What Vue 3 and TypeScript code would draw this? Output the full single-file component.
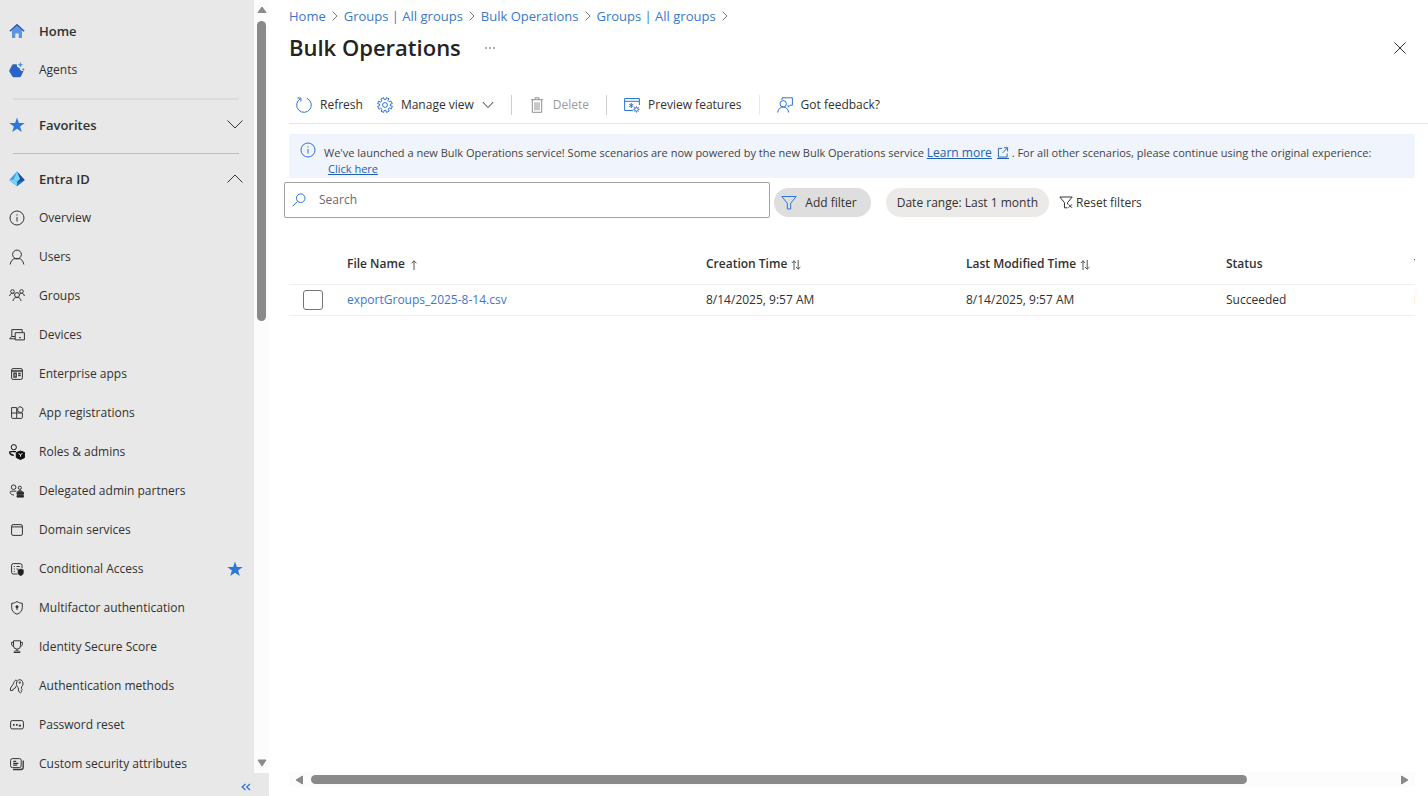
<script setup lang="ts">
import { ref } from 'vue'

interface NavItem {
  label: string
  icon: string
  starred?: boolean
}

const icons: Record<string, string> = {
  home: '<path d="M3 7.5 8 3l5 4.5V15H9.7v-4.6H6.3V15H3z" fill="#5b93e6"/><path d="M8 .8 0.4 7.8l1 1L8 3l6.6 5.8 1-1z" fill="#285ba8"/>',
  agents: '<path d="M4.600 2.200h3.200c-.2 2.300.8 3.400 2.700 3.700.1 2 1.300 3.100 3.900 3.200l-2.200 5a1.800 1.800 0 0 1-1.700 1.200H4.800a1.800 1.800 0 0 1-1.600-1L.5 9.700a2 2 0 0 1 0-1.800l2.500-4.700a1.800 1.800 0 0 1 1.600-1z" fill="#2b62c6"/><path d="m11.400 0 .8 2 2 .8-2 .8-.8 2-.8-2-2-.8 2-.8z" fill="#4a8be6"/><path d="m14.300 5.800.5 1.300 1.200.5-1.200.5-.5 1.200-.5-1.200-1.300-.5 1.300-.5z" fill="#4a8be6"/>',
  star: '<path d="m8 .4 1.900 5.500h5.800l-4.600 3.500 1.700 5.700L8 11.700l-4.800 3.400 1.700-5.700L.3 5.900h5.800z" fill="#2f77d6"/>',
  entra: '<path d="M8 .6 15.700 9 8 15 .3 9z" fill="#3c9bdc"/><path d="M8 .6 15.700 9 8 15V9.500L11 8z" fill="#1d4c9c"/><path d="M8 .6 11 8 8 11 4.500 8.500z" fill="#73d4f4"/><path d="M.3 9 8 11.500 15.700 9 8 15z" fill="#2476bd"/><path d="M.3 9 4.500 8.500 8 11v4z" fill="#76d6f5"/>',
  info: '<circle cx="8" cy="8" r="7"/><path d="M8 7v4.500M8 4.300v1.300"/>',
  user: '<circle cx="8" cy="5.500" r="4.400"/><path d="M1.200 15.500c.5-3.600 2.600-5.600 4.700-5.900h4.200c2.100.3 4.200 2.300 4.700 5.900"/>',
  groups: '<circle cx="3.500" cy="3.500" r="1.800"/><circle cx="12.500" cy="3.500" r="1.800"/><circle cx="8" cy="7" r="2.400"/><path d="M.6 8C1 6.300 2 5.300 3.500 5.300S5 6 5.600 6.500M10.400 6.500c.6-.8 1.200-1.200 2.100-1.200 1.500 0 2.500 1 2.900 2.700M4 13c.3-2.200 1.300-3.600 4-3.600s3.700 1.400 4 3.600"/>',
  devices: '<path d="M2.800 9.500V2.600h10.400v2.600M6 11.800H.7L2.600 9.500H6M6.200 5.700h9.200v7.200H6.200zM10 10.700h2"/>',
  enterprise: '<rect x="2.600" y="2.600" width="10.800" height="10.800" rx="1.500"/><path d="M2.600 5h10.800M5 7.200h2.200v4H5zM9.200 7.500h2.500M9.200 9.500h2.500" stroke-width="1.300"/>',
  appreg: '<path d="M2.600 2.600h5.100v10.800H3.600a1 1 0 0 1-1-1zM2.600 8h10.800v4.400a1 1 0 0 1-1 1H7.700"/><path d="m11 1.500 3 2-.3 3-2 1.200-3-1.400V3.500z"/>',
  roles: '<circle cx="4.800" cy="3.200" r="2.600" stroke="#111"/><path d="M7 7.600H1.500C0 7.600.5 11.200 4.800 11.200" stroke="#111" stroke-width="1.400"/><path d="m11.500 7 4.200 1.500v5L11.500 15.500l-4.200-2v-5z" fill="#111" stroke="#111"/><path d="m9.500 9.500 2 1.200 2-1.200M11.500 10.700v2" stroke="#eee"/>',
  partners: '<circle cx="4.600" cy="4.200" r="2.300"/><circle cx="10.800" cy="4.800" r="1.600"/><path d="M7.400 8.200H2C.5 8.200.9 12 5 12"/><path d="M8.500 8.800c.2-1.500 4.800-1.500 5 0M8 9.300h6.500v2H8zM8 12.500h6.500v1.600H8z" fill="#222"/>',
  domain: '<rect x="2.600" y="2.600" width="10.800" height="10.800" rx="1.500"/><path d="M2.600 4.900h10.800"/>',
  conditional: '<path d="M8.500 13H4.300a1.700 1.700 0 0 1-1.700-1.700v-7a1.700 1.700 0 0 1 1.700-1.700h7a1.700 1.700 0 0 1 1.700 1.700v3M4.800 5.500h1M7.500 5.500h3.300M4.800 8h1M7.500 8h1.800M4.800 10.500h1"/><path d="m11.700 7.700 3 1v2.600c0 1.800-1 3-3 3.700-2-.7-3-1.900-3-3.700V8.700z" fill="#222" stroke="none"/>',
  mfa: '<path d="M8 1.500c1.700 1.200 3.300 1.700 5.300 1.800v4.200c0 3.200-1.800 5.400-5.300 6.700C4.500 12.900 2.700 10.700 2.700 7.500V3.300C4.700 3.200 6.300 2.700 8 1.500z"/><circle cx="8" cy="6.800" r="1.100" fill="#222"/><path d="M8 7v3"/>',
  trophy: '<path d="M4.500 1.800h7v4.900a3.500 3.500 0 0 1-7 0zM4.500 3.400H2.600v1.500c0 1.500.8 2.300 2 2.500M11.500 3.400h1.900v1.500c0 1.500-.8 2.300-2 2.500M8 10.200V12M5 13.500c0-1 .5-1.500 1.200-1.500h3.600c.7 0 1.200.5 1.200 1.500z"/>',
  keys: '<path d="M8 2.700C6 1 4.900 4 4.500 5.700L1.500 10l-.1 2.500h2.300l.6-1.500 1.500-.5 1.300-2.400"/><path d="M9.200 9.500C6.500 8 6.800 2 10.800 1.700c3.800.3 4 5.700 1.800 7.100l-.3 1.500 1 1-1 1.300.5 1-1.300 1.200-1.700-1.200z"/><circle cx="10.800" cy="4.600" r=".7"/>',
  password: '<rect x="1.600" y="3.600" width="12.800" height="8.300" rx="1.700"/><path d="M4 7.800h1.600M7 7.800h1.600M9.800 8.600H12" stroke-width="1.700"/>',
  attributes: '<rect x="1.600" y="2.600" width="10.600" height="9" rx="1.800"/><path d="M4.200 5.400h3M4.200 7.300h5.200M4.200 9.200h4M14.200 4.500v6.700a2.300 2.300 0 0 1-2.300 2.300H4" stroke-width="1.300"/>',
}

const topItems: NavItem[] = [
  { label: 'Home', icon: 'home' },
  { label: 'Agents', icon: 'agents' },
]

const entraItems: NavItem[] = [
  { label: 'Overview', icon: 'info' },
  { label: 'Users', icon: 'user' },
  { label: 'Groups', icon: 'groups' },
  { label: 'Devices', icon: 'devices' },
  { label: 'Enterprise apps', icon: 'enterprise' },
  { label: 'App registrations', icon: 'appreg' },
  { label: 'Roles & admins', icon: 'roles' },
  { label: 'Delegated admin partners', icon: 'partners' },
  { label: 'Domain services', icon: 'domain' },
  { label: 'Conditional Access', icon: 'conditional', starred: true },
  { label: 'Multifactor authentication', icon: 'mfa' },
  { label: 'Identity Secure Score', icon: 'trophy' },
  { label: 'Authentication methods', icon: 'keys' },
  { label: 'Password reset', icon: 'password' },
  { label: 'Custom security attributes', icon: 'attributes' },
]

const crumbs = ['Home', 'Groups | All groups', 'Bulk Operations', 'Groups | All groups']

const rows = [
  {
    file: 'exportGroups_2025-8-14.csv',
    created: '8/14/2025, 9:57 AM',
    modified: '8/14/2025, 9:57 AM',
    status: 'Succeeded',
    type: 'Export',
  },
]

const search = ref('')
const selected = ref<string[]>([])
</script>

<template>
  <div class="portal">
    <aside class="sidebar">
      <div class="side-body">
        <nav class="nav" aria-label="Main">
          <a v-for="(item, i) in topItems" :key="item.label" href="#" class="nav-item" :class="{ strong: i === 0 }">
            <svg class="ico" viewBox="0 0 16 16" aria-hidden="true" v-html="icons[item.icon]"></svg>
            <span>{{ item.label }}</span>
          </a>
          <hr class="rule faint" />
          <button class="nav-item strong" type="button" aria-expanded="false">
            <svg class="ico" viewBox="0 0 16 16" aria-hidden="true" v-html="icons.star"></svg>
            <span>Favorites</span>
            <svg class="ico end line" viewBox="0 0 16 16" aria-hidden="true"><path d="m.5 3.500 7.500 7.500 7.500-7.500" /></svg>
          </button>
          <hr class="rule" />
          <button class="nav-item strong" type="button" aria-expanded="true">
            <svg class="ico" viewBox="0 0 16 16" aria-hidden="true" v-html="icons.entra"></svg>
            <span>Entra ID</span>
            <svg class="ico end line" viewBox="0 0 16 16" aria-hidden="true"><path d="M.5 11.500 8 4l7.500 7.500" /></svg>
          </button>
          <a v-for="item in entraItems" :key="item.label" href="#" class="nav-item">
            <svg class="ico line" viewBox="0 0 16 16" aria-hidden="true" v-html="icons[item.icon]"></svg>
            <span>{{ item.label }}</span>
            <svg v-if="item.starred" class="ico end" viewBox="0 0 16 16" aria-hidden="true" v-html="icons.star"></svg>
          </a>
        </nav>
        <div class="vbar" aria-hidden="true">
          <svg class="arrow" viewBox="0 0 10 8"><path d="M5 1 9 6.500H1z" /></svg>
          <div class="vtrack"><div class="vthumb"></div></div>
          <svg class="arrow" viewBox="0 0 10 8"><path d="M1 1h8L5 7z" /></svg>
        </div>
      </div>
      <div class="side-foot">
        <button type="button" class="collapse" aria-label="Collapse menu">
          <svg viewBox="0 0 10 8" aria-hidden="true"><path d="M4.500 1 1.200 4l3.300 3M9 1 5.700 4 9 7" /></svg>
        </button>
      </div>
    </aside>

    <main class="content">
      <nav class="crumbs" aria-label="Breadcrumb">
        <template v-for="(c, i) in crumbs" :key="i">
          <a href="#">{{ c }}</a>
          <svg viewBox="0 0 6 10" aria-hidden="true"><path d="m.7.7 4.300 4.300L.7 9.300" /></svg>
        </template>
      </nav>

      <header class="title-row">
        <h1>Bulk Operations</h1>
        <button type="button" class="plain more" aria-label="More">
          <svg viewBox="0 0 12 4" aria-hidden="true"><circle cx="2" cy="2" r=".8" /><circle cx="6" cy="2" r=".8" /><circle cx="10" cy="2" r=".8" /></svg>
        </button>
        <button type="button" class="plain close" aria-label="Close">
          <svg viewBox="0 0 12 12" aria-hidden="true"><path d="m.5.5 11 11M11.500.5l-11 11" /></svg>
        </button>
      </header>

      <div class="toolbar">
        <button type="button" class="plain tool">
          <svg class="ico blue" viewBox="0 0 16 16" aria-hidden="true"><path d="M10.800 1.300A7.300 7.300 0 1 1 4.200 1.800M1.300 1h3.600v3.600" /></svg>
          Refresh
        </button>
        <button type="button" class="plain tool manage">
          <svg class="ico blue" viewBox="0 0 16 16" aria-hidden="true">
            <circle cx="8" cy="8" r="2.400" />
            <path d="m6.700.6.4 2 1.800 0 .4-2 2.700 1.100-1.100 1.700 1.300 1.300L13.900 4l1.500 2.700-2 .4v1.800l2 .4-1.200 2.700-1.800-1.100-1.200 1.300 1.100 1.800-2.900 1.400-.5-2H7.100l-.4 2L4 14.300l1.100-1.800-1.400-1.300L2 12.300.6 9.300l2-.4V7.100l-2-.4 1.200-2.600 1.700 1.100 1.300-1.400L3.800 2z" />
          </svg>
          Manage view
          <svg class="chev" viewBox="0 0 12 8" aria-hidden="true"><path d="m.7 1 5.300 5.500L11.300 1" /></svg>
        </button>
        <span class="sep"></span>
        <button type="button" class="plain tool delete" disabled>
          <svg class="ico gray" viewBox="0 0 16 16" aria-hidden="true"><path d="M2 2.700h12M6 2.500V.8h4v1.700M3.300 3v12.300h9.400V3M6 5.300v8M8 5.300v8M10 5.300v8" /></svg>
          Delete
        </button>
        <span class="sep"></span>
        <button type="button" class="plain tool preview">
          <svg class="ico blue" viewBox="0 0 16 16" aria-hidden="true"><path d="M9 13.500H.6v-12h14.800V8M.6 4.300h14.800" /><circle cx="12.400" cy="12.400" r="1.800" /><path d="M12.400 9.300v1.300M12.400 14.200v1.400M9.300 12.400h1.300M14.200 12.400h1.400M10.200 10.200l.9.900M13.700 13.700l.9.900M14.600 10.200l-.9.900M11.100 13.700l-.9.900M7.300 6v5M5.200 7.200l4.200 2.500M9.400 7.200 5.200 9.700" /></svg>
          Preview features
        </button>
        <span class="sep faint"></span>
        <button type="button" class="plain tool feedback">
          <svg class="ico blue" viewBox="0 0 16 16" aria-hidden="true"><path d="M5 3V.8h10.400v7.400h-2.200l-2 2V8.200" /><circle cx="6.200" cy="6.800" r="3.200" /><path d="M.7 15.500c.4-3.500 2.600-5.500 5.500-5.500s5.100 2 5.500 5.500" /></svg>
          Got feedback?
        </button>
      </div>

      <section class="banner">
        <svg class="ico blue" viewBox="0 0 16 16" aria-hidden="true" v-html="icons.info"></svg>
        <p>
          We've launched a new Bulk Operations service! Some scenarios are now powered by the new Bulk Operations service
          <a href="#" class="learn">Learn more<svg viewBox="0 0 12 12" aria-hidden="true"><path d="M5 1.500H1v9.500h9.500V7M7 .8h4v4M11 .8 5.500 6.500" /></svg></a>
          . For all other scenarios, please continue using the original experience:<br />
          <a href="#" class="click">Click here</a>
        </p>
      </section>

      <div class="filters">
        <label class="search">
          <svg viewBox="0 0 14 14" aria-hidden="true"><circle cx="8.700" cy="5.200" r="4.300" /><path d="M5.500 8.400.6 13.300" /></svg>
          <input v-model="search" type="text" placeholder="Search" aria-label="Search" />
        </label>
        <button type="button" class="pill add">
          <svg class="ico blue" viewBox="0 0 16 16" aria-hidden="true"><path d="M.8 1.500h14.400L9.700 8.300V14H6.300V8.300z" /></svg>
          Add filter
        </button>
        <button type="button" class="pill range">Date range: Last 1 month</button>
        <button type="button" class="plain reset">
          <svg viewBox="0 0 14 13" aria-hidden="true"><path d="M8.500 11.800H5.500V6.700L.8 1h12.400L8.500 6.700v1.500M9.500 8.300l3.500 3.500M13 8.300l-3.500 3.500" /></svg>
          Reset filters
        </button>
      </div>

      <div class="grid-wrap">
        <table>
          <colgroup>
            <col class="c-check" />
            <col class="c-file" />
            <col class="c-time" />
            <col class="c-time" />
            <col class="c-status" />
            <col class="c-type" />
          </colgroup>
          <thead>
            <tr>
              <td></td>
              <th>File Name <svg viewBox="0 0 10 10" aria-hidden="true"><path d="M5 10V.8M2.500 3.300 5 .8l2.500 2.500" /></svg></th>
              <th>Creation Time <svg viewBox="0 0 10 10" aria-hidden="true"><path d="M3 10V.8M.8 3 3 .8 5 3M7.200 0v9.200M5 7l2.200 2.200L9.400 7" /></svg></th>
              <th>Last Modified Time <svg viewBox="0 0 10 10" aria-hidden="true"><path d="M3 10V.8M.8 3 3 .8 5 3M7.200 0v9.200M5 7l2.200 2.200L9.400 7" /></svg></th>
              <th>Status</th>
              <th>Type</th>
            </tr>
          </thead>
          <tbody>
            <tr v-for="r in rows" :key="r.file">
              <td class="check"><input v-model="selected" type="checkbox" :value="r.file" :aria-label="'Select ' + r.file" /></td>
              <td><a href="#">{{ r.file }}</a></td>
              <td>{{ r.created }}</td>
              <td>{{ r.modified }}</td>
              <td>{{ r.status }}</td>
              <td>{{ r.type }}</td>
            </tr>
          </tbody>
        </table>
      </div>

      <div class="hbar" aria-hidden="true">
        <svg viewBox="0 0 8 10"><path d="M7.500 1v8L1 5z" /></svg>
        <div class="htrack"><div class="hthumb"></div></div>
        <svg viewBox="0 0 8 10"><path d="M.5 1v8L7 5z" /></svg>
      </div>
    </main>
  </div>
</template>

<style>
body {
  margin: 0;
}
</style>

<style scoped>
* {
  box-sizing: border-box;
}
.portal {
  display: flex;
  height: 100vh;
  overflow: hidden;
  background: #fff;
  color: #323130;
  font-family: 'Open Sans', 'Noto Sans', sans-serif;
  font-size: 12px;
  line-height: 20px;
}
a {
  color: #3a78cb;
  text-decoration: none;
}
button,
input {
  font: inherit;
  color: inherit;
}
svg {
  display: block;
  flex: none;
  fill: none;
  stroke: #333;
  stroke-width: 1;
}
.ico {
  width: 16px;
  height: 16px;
  stroke: none;
}
.ico.line {
  stroke: #333;
}
.ico.blue {
  stroke: #2f74d8;
}
.ico.gray {
  stroke: #8f8f8f;
}

.sidebar {
  display: flex;
  flex-direction: column;
  flex: none;
  width: 269px;
  background: #e8e8e8;
}
.side-body {
  display: flex;
  flex: 1;
  min-height: 0;
}
.nav {
  flex: 1;
  overflow: hidden;
  padding-top: 11px;
}
.nav-item {
  display: flex;
  align-items: center;
  gap: 14px;
  width: 100%;
  height: 39px;
  padding: 0 11px 0 9px;
  border: 0;
  background: none;
  color: #323130;
  text-align: left;
}
.strong {
  font-size: 13px;
  font-weight: 600;
}
.nav-item .end {
  margin-left: auto;
}
.rule {
  height: 1px;
  margin: 9px 15px 5px 13px;
  border: 0;
  background: #bebebe;
}
.rule.faint {
  height: 2px;
  background: #dcdcdc;
}
.vbar {
  display: flex;
  flex-direction: column;
  align-items: center;
  width: 15px;
  padding: 6px 0;
  background: #fcfcfc;
}
.arrow {
  width: 10px;
  height: 8px;
}
.arrow path,
.hbar path {
  fill: #8a8a8a;
  stroke: #8a8a8a;
  stroke-linejoin: round;
}
.vtrack {
  flex: 1;
  padding: 7px 0;
}
.vthumb {
  width: 9px;
  height: 41%;
  border-radius: 5px;
  background: #8a8a8a;
}
.side-foot {
  display: flex;
  justify-content: flex-end;
  height: 23px;
  padding: 4px 18px 0 0;
}
.collapse {
  padding: 0;
  border: 0;
  background: none;
}
.collapse svg {
  width: 10px;
  height: 8px;
  stroke: #2f74d8;
  stroke-width: 1.300;
}

.content {
  display: flex;
  flex-direction: column;
  flex: 1;
  min-width: 0;
  padding: 6px 13px 9px 20px;
}
.crumbs {
  display: flex;
  align-items: center;
  gap: 6px;
  height: 20px;
  font-size: 13px;
}
.crumbs svg {
  width: 6px;
  height: 10px;
  stroke: #777;
}
.title-row {
  display: flex;
  align-items: center;
  height: 44px;
  padding-right: 9px;
}
h1 {
  margin: 0;
  padding-bottom: 2px;
  color: #242322;
  font-size: 22px;
  font-weight: 600;
  line-height: 32px;
}
.plain {
  display: flex;
  align-items: center;
  padding: 0;
  border: 0;
  background: none;
}
.more {
  margin-left: 23px;
}
.more svg {
  width: 12px;
  height: 4px;
  fill: #444;
  stroke: none;
}
.close {
  margin-left: auto;
}
.close svg {
  width: 12px;
  height: 12px;
}
.toolbar {
  display: flex;
  align-items: center;
  height: 54px;
  margin-right: -13px;
  padding: 17px 0 0 7px;
  border-bottom: 1px solid #e6e6e6;
}
.tool {
  gap: 8px;
}
.manage {
  margin-left: 14px;
}
.chev {
  width: 12px;
  height: 8px;
}
.sep {
  width: 1px;
  height: 20px;
  margin: 0 17px;
  background: #cfcfcf;
}
.sep.faint {
  background: #e8e8e8;
}
.delete {
  color: #9c9b9a;
}
.banner {
  display: flex;
  gap: 8px;
  margin-top: 10px;
  padding: 8px 11px 0;
  height: 44px;
  background: #f0f4fd;
  color: #444;
  font-size: 11px;
  line-height: 16px;
}
.banner p {
  margin: 3px 0 0;
}
.banner a {
  color: #2160b4;
  text-decoration: underline;
}
.learn {
  font-size: 12px;
}
.learn svg {
  display: inline-block;
  width: 12px;
  height: 12px;
  margin-left: 5px;
  border-bottom: 1px solid #2160b4;
  stroke: #2160b4;
  vertical-align: -2px;
}
.click {
  margin-left: 4px;
}
.filters {
  display: flex;
  align-items: center;
  margin: 4px 0 0 -5px;
  height: 36px;
}
.search {
  display: flex;
  align-items: center;
  gap: 13px;
  width: 43%;
  height: 36px;
  padding: 0 7px;
  border: 1px solid #a3a2a1;
  border-radius: 2px;
}
.search svg {
  width: 14px;
  height: 14px;
  stroke: #2f74d8;
}
.search input {
  flex: 1;
  min-width: 0;
  padding: 0;
  border: 0;
  outline: 0;
  background: none;
}
.search input::placeholder {
  color: #6b6a69;
  opacity: 1;
}
.pill {
  display: flex;
  align-items: center;
  height: 29px;
  margin-top: 5px;
  border: 0;
  border-radius: 15px;
}
.add {
  gap: 8px;
  margin-left: 4px;
  padding: 0 14px 0 7px;
  background: #dedede;
}
.range {
  margin-left: 15px;
  padding: 0 11px;
  background: #ebeae9;
}
.reset {
  gap: 3px;
  margin: 5px 0 0 10px;
}
.reset svg {
  width: 14px;
  height: 13px;
}
.grid-wrap {
  flex: 1;
  min-height: 0;
  margin-top: 23px;
  overflow: hidden;
}
table {
  width: 112%;
  border-collapse: collapse;
  table-layout: fixed;
}
.c-check {
  width: 58px;
}
.c-file {
  width: 359px;
}
.c-time {
  width: 260px;
}
.c-status {
  width: 188px;
}
th,
td {
  height: 31px;
  padding: 0;
  border-bottom: 1px solid #f0f0f0;
  text-align: left;
  white-space: nowrap;
}
thead th,
thead td {
  height: 43px;
  padding-top: 3px;
  font-weight: 600;
}
th svg {
  display: inline-block;
  width: 10px;
  height: 10px;
  margin-left: 1px;
  vertical-align: -2px;
  stroke: #555;
}
.check input {
  display: block;
  width: 20px;
  height: 20px;
  margin: 1px 0 0 14px;
  appearance: none;
  border: 1px solid #767574;
  border-radius: 3px;
  background: #fff;
}
.hbar {
  display: flex;
  align-items: center;
  gap: 8px;
  height: 15px;
  padding: 0 6px;
  background: #fcfcfc;
}
.hbar svg {
  width: 8px;
  height: 10px;
}
.htrack {
  flex: 1;
}
.hthumb {
  width: 86.5%;
  height: 9px;
  border-radius: 5px;
  background: #8a8a8a;
}
</style>
